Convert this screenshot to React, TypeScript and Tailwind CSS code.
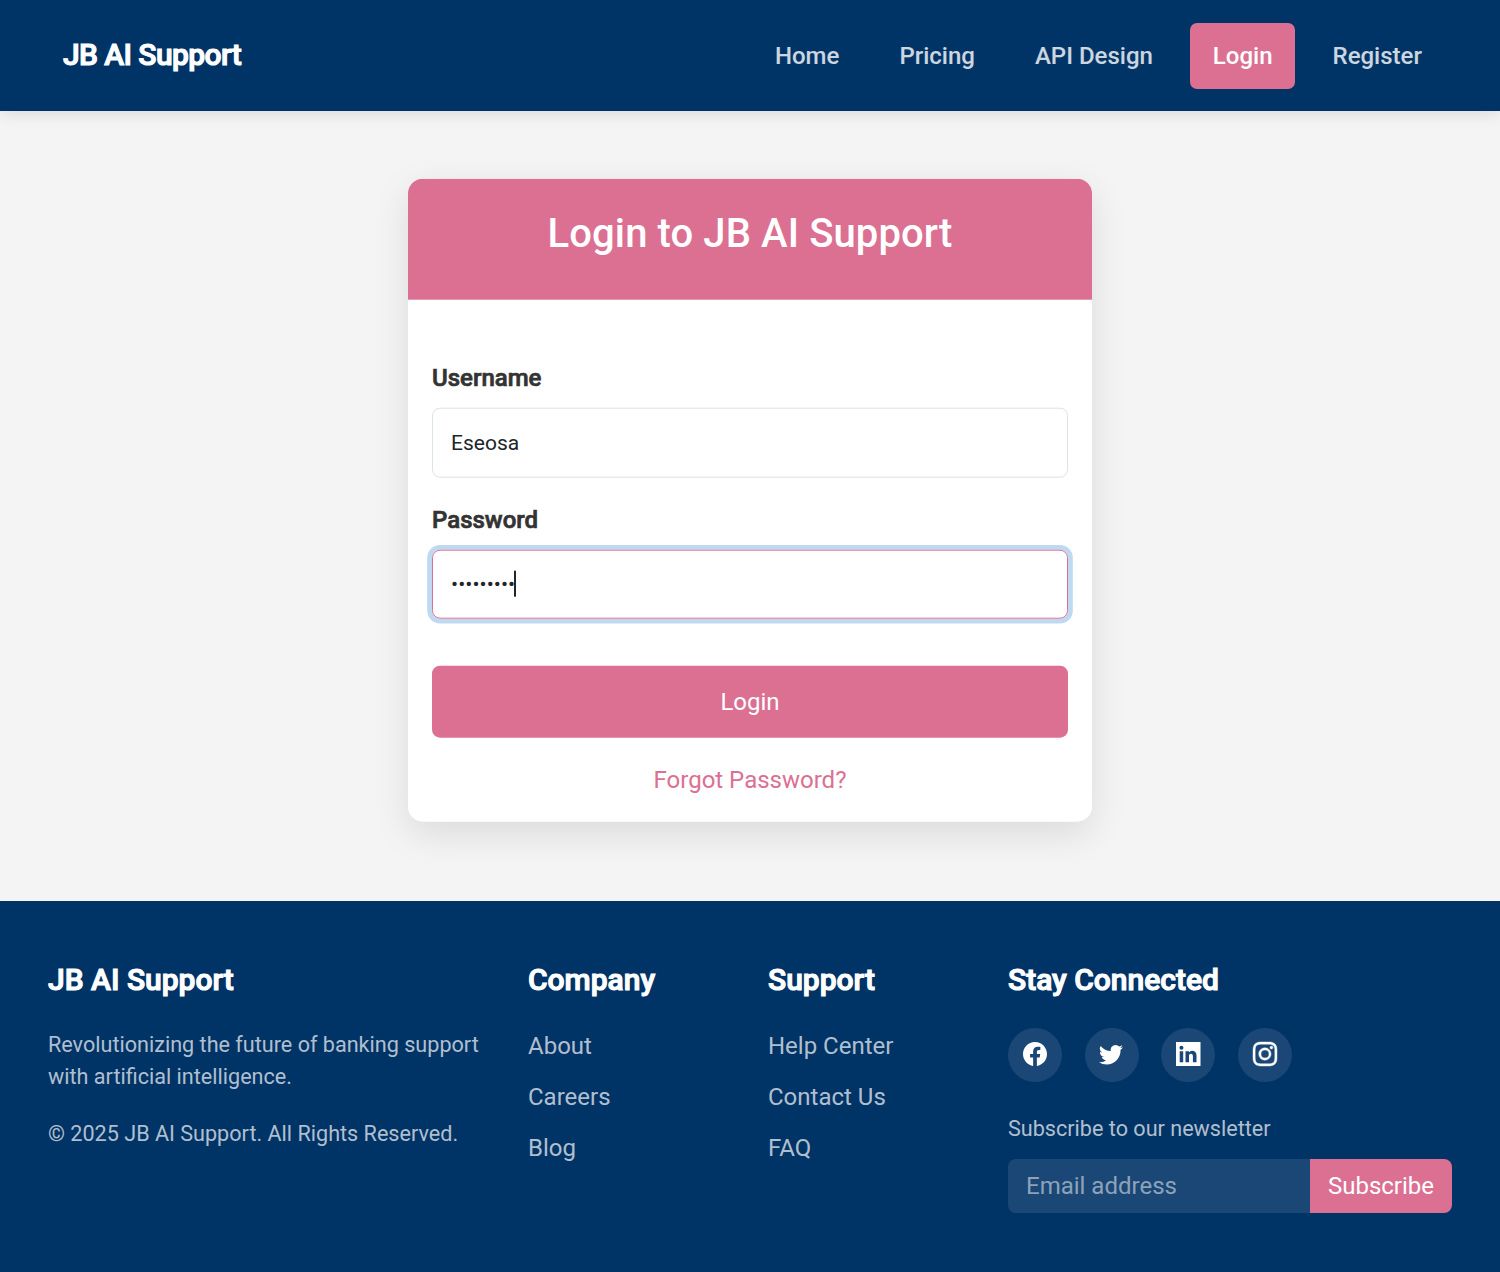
import React from "react";
import { BsFacebook, BsTwitter, BsInstagram } from "react-icons/bs";

const nav = ["Home", "Pricing", "API Design", "Login", "Register"];

function LinkedinIcon({ size }: { size: number }) {
  return (
    <svg width={size} height={size} viewBox="0 0 24 24" fill="currentColor" className="overflow-visible">
      <path
        fillRule="evenodd"
        d="M0 0h24.5v24H0zM3.7 9.2v11h3.5v-11zM5.4 3.8a2 2 0 1 0 .1 4 2 2 0 0 0-.1-4zM9.5 9.2v11H13v-6.3c0-1.4.8-2.2 2-2.2 1.3 0 1.9 1 1.9 2.3v6.2h3.6v-6.7c0-3.2-1.8-4.7-4.2-4.7-1.7 0-2.8.9-3.3 1.8V9.2z"
      />
    </svg>
  );
}

function InstagramIcon({ size }: { size: number }) {
  return <BsInstagram size={size} stroke="currentColor" strokeWidth={0.3} className="overflow-visible" />;
}

const social = [BsFacebook, BsTwitter, LinkedinIcon, InstagramIcon];

function Heading({ children }: { children: string }) {
  return (
    <h5 className="mb-[30px] text-[30px] leading-9 font-medium text-white [-webkit-text-stroke:1.1px_white]">{children}</h5>
  );
}

function Links({ title, items }: { title: string; items: string[] }) {
  return (
    <div className="w-[240px]">
      <Heading>{title}</Heading>
      <ul className="space-y-[15px] text-[24px] leading-9">
        {items.map((i) => (
          <li key={i}>{i}</li>
        ))}
      </ul>
    </div>
  );
}

function Label({ children }: { children: string }) {
  return (
    <label className="block text-[24px] leading-9 font-medium text-[#333] [-webkit-text-stroke:0.7px_#333]">
      {children}
    </label>
  );
}

export default function App() {
  return (
    <div className="flex h-[1272px] w-[1500px] flex-col overflow-hidden bg-[#f4f4f4] font-['Roboto',sans-serif] text-[#212529]">
      <header className="relative flex h-[111px] shrink-0 items-center justify-between bg-[#003366] pr-[55.6px] pl-[63px] shadow-[0_3px_15px_rgba(0,0,0,0.1)]">
        <div className="mb-[2px] text-[30px] leading-[45px] font-medium tracking-[-0.6px] text-white [-webkit-text-stroke:1.1px_white]">
          JB AI Support
        </div>
        <nav className="flex gap-[15px] text-[24px] leading-9 font-medium">
          {nav.map((n) => (
            <a
              key={n}
              className={
                n === "Login"
                  ? "rounded-[7px] bg-[#db7093] px-[22.5px] py-[15px] text-white"
                  : "px-[22.5px] py-[15px] text-white/80"
              }
            >
              {n}
            </a>
          ))}
        </nav>
      </header>
      <main className="flex h-[790px] shrink-0 justify-center pt-[68px]">
        <section className="h-[643px] w-[684px] -translate-y-[0.3px] overflow-hidden rounded-[15px] bg-white shadow-[0_12px_36px_rgba(0,0,0,0.1)]">
          <div className="flex h-[120.6px] justify-center bg-[#db7093] pt-[31px]">
            <h1 className="text-[40px] leading-[48px] font-medium tracking-[0.1px] text-white">Login to JB AI Support</h1>
          </div>
          <form className="px-6 pt-[60.7px]">
            <Label>Username</Label>
            <div className="mt-[11.5px] flex h-[70px] items-center rounded-[8px] border border-[#dee2e6] px-[18px] pt-px text-[21px]">Eseosa</div>
            <div className="mt-6">
              <Label>Password</Label>
            </div>
            <div className="mt-[12px] flex h-[69px] items-center rounded-[8px] border border-[#db7093] px-[18px] text-[21px] shadow-[0_0_0_4.8px_#bfd9f2]">
              <span className="tracking-[0.05px]">•••••••••</span>
              <span className="-ml-[1.5px] h-[26px] w-[2px] bg-[#212529]" />
            </div>
            <div className="mt-[47px] flex h-[72px] items-center justify-center rounded-[8px] bg-[#db7093] text-[24px] text-white">Login</div>
            <div className="mt-6 text-center text-[24px] leading-9 text-[#db7093]">Forgot Password?</div>
          </form>
        </section>
      </main>
      <footer className="flex h-[371px] shrink-0 bg-[#003366] px-12 pt-[61px] text-white/70">
        <div className="w-[480px]">
          <Heading>JB AI Support</Heading>
          <p className="pt-px text-[21.6px] leading-8">
            Revolutionizing the future of banking support
            <br />
            with artificial intelligence.
          </p>
          <p className="mt-[25px] text-[21.6px] leading-8">© 2025 JB AI Support. All Rights Reserved.</p>
        </div>
        <Links title="Company" items={["About", "Careers", "Blog"]} />
        <Links title="Support" items={["Help Center", "Contact Us", "FAQ"]} />
        <div className="w-[444px]">
          <Heading>Stay Connected</Heading>
          <div className="flex gap-[22.7px] text-white">
            {social.map((Icon, i) => (
              <span key={i} className="flex size-[54px] items-center justify-center rounded-full bg-white/10 pr-px pb-[2px]">
                <Icon size={24} />
              </span>
            ))}
          </div>
          <p className="mt-[31px] text-[21.6px] leading-8">Subscribe to our newsletter</p>
          <div className="mt-[14px] flex h-[54px] overflow-hidden rounded-[8px] text-[24px] leading-[54px]">
            <span className="w-[302px] bg-white/10 pl-[18px] text-white/50">Email address</span>
            <span className="flex-1 bg-[#db7093] text-center text-white">Subscribe</span>
          </div>
        </div>
      </footer>
    </div>
  );
}
